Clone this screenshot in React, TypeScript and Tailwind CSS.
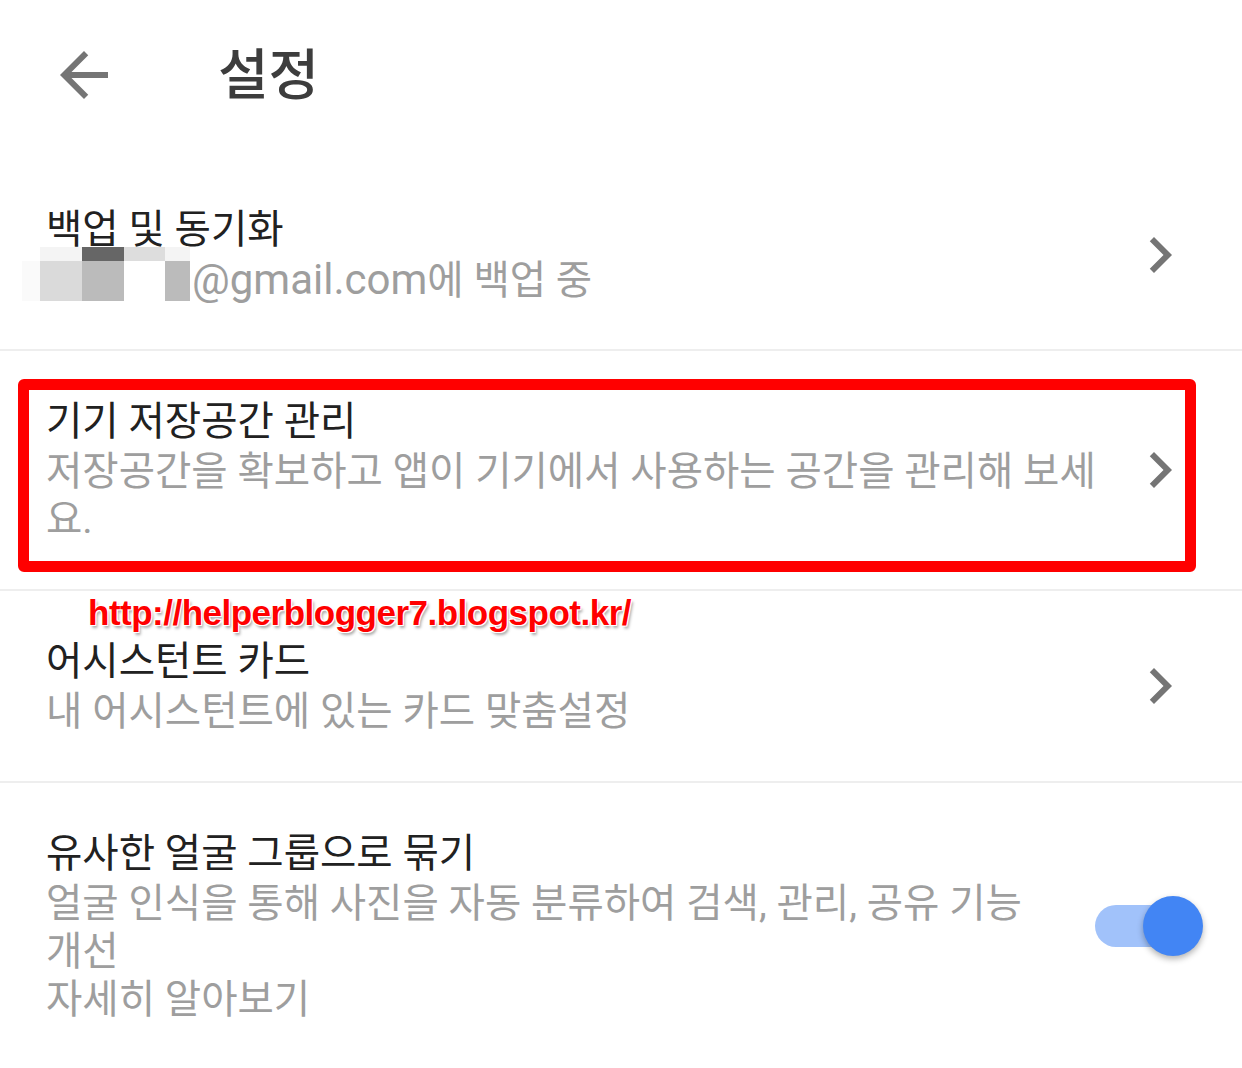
import React from "react";

const FONT = "font-['Roboto','Noto_Sans_CJK_KR',sans-serif]";

function Chevron() {
    return (
        <svg viewBox="0 0 24 24" className="w-[72px] h-[72px] shrink-0 fill-[#757575]">
            <path d="M10 6L8.59 7.41 13.17 12l-4.58 4.59L10 18l6-6z" />
        </svg>
    );
}

// pixelated (blurred) account name in front of the address
function MaskedName() {
    return (
        <div className="absolute left-[-24px] top-[-9px] flex flex-col">
            <div className="flex h-[14px]">
                <div className="w-[18px]" />
                <div className="w-[42px] bg-[#f4f4f4]" />
                <div className="w-[42px] bg-[#666666]" />
                <div className="w-[41px] bg-[#dddddd]" />
                <div className="w-[25px] bg-[#f4f4f4]" />
            </div>
            <div className="flex h-[40px]">
                <div className="w-[18px] bg-[#fafafa]" />
                <div className="w-[42px] bg-[#dadada]" />
                <div className="w-[42px] bg-[#bbbbbb]" />
                <div className="w-[41px] bg-white" />
                <div className="w-[25px] bg-[#bbbbbb]" />
            </div>
        </div>
    );
}

export default function App() {
    return (
        <div className={`w-[1242px] h-[1068px] bg-white overflow-hidden ${FONT}`}>
            {/* Header */}
            <div className="h-[160px] flex items-start pt-[39px] pl-[48px]">
                <svg viewBox="0 0 24 24" className="w-[72px] h-[72px] fill-[#757575]">
                    <path d="M20 11H7.83l5.59-5.59L12 4l-8 8 8 8 1.41-1.41L7.83 13H20v-2z" />
                </svg>
                <h1 className="ml-[98px] text-[55px] leading-[72px] text-[#3d3d3d] font-medium">설정</h1>
            </div>

            {/* Backup */}
            <div className="h-[191px] flex items-center pl-[46px] pr-[46px] border-b-2 border-[#eeeeee]">
                <div className="flex-1 min-w-0 pr-[14px]">
                    <div className="text-[39.5px] leading-[52px] text-[#212121]">백업 및 동기화</div>
                    <div className="relative pl-[146px] text-[39.5px] leading-[48px] text-[#9e9e9e] whitespace-nowrap">
                        <MaskedName />
                        <span className="text-[42px]">@gmail.com</span>에 백업 중
                    </div>
                </div>
                <Chevron />
            </div>

            {/* Storage */}
            <div className="relative h-[240px] flex items-center pl-[46px] pr-[46px] border-b-2 border-[#eeeeee]">
                <div className="flex-1 min-w-0 pr-[14px]">
                    <div className="text-[39.5px] leading-[52px] text-[#212121]">기기 저장공간 관리</div>
                    <div className="text-[39.5px] leading-[48px] text-[#9e9e9e]">
                        저장공간을 확보하고 앱이 기기에서 사용하는 공간을 관리해 보세요.
                    </div>
                </div>
                <Chevron />
                <div className="absolute left-[18px] right-[46px] top-[28px] bottom-[17px] border-[11px] border-[#ff0000] rounded-[6px] pointer-events-none" />
            </div>

            {/* Assistant cards */}
            <div className="relative h-[192px] flex items-center pl-[46px] pr-[46px] border-b-2 border-[#eeeeee]">
                <div className="flex-1 min-w-0 pr-[14px]">
                    <div className="text-[39.5px] leading-[52px] text-[#212121]">어시스턴트 카드</div>
                    <div className="text-[39.5px] leading-[48px] text-[#9e9e9e]">내 어시스턴트에 있는 카드 맞춤설정</div>
                </div>
                <Chevron />
                <div className="absolute left-[88px] top-[4px] font-['Liberation_Sans',Arial,sans-serif] font-bold text-[35px] leading-[35px] tracking-[-0.5px] text-[#ff0000] [text-shadow:1px_1px_0_#fff,-1px_-1px_0_#fff,1px_-1px_0_#fff,-1px_1px_0_#fff,2px_3px_3px_rgba(0,0,0,0.35)]">
                    http://helperblogger7.blogspot.kr/
                </div>
            </div>

            {/* Face grouping */}
            <div className="h-[285px] flex items-center pl-[46px] pr-[39px]">
                <div className="flex-1 min-w-0 pr-[35px]">
                    <div className="text-[39.5px] leading-[52px] text-[#212121]">유사한 얼굴 그룹으로 묶기</div>
                    <div className="text-[39.5px] leading-[48px] text-[#9e9e9e]">
                        얼굴 인식을 통해 사진을 자동 분류하여 검색, 관리, 공유 기능 개선
                    </div>
                    <div className="text-[39.5px] leading-[48px] text-[#9e9e9e]">자세히 알아보기</div>
                </div>
                <div className="relative w-[108px] h-[60px] shrink-0">
                    <div className="absolute left-0 top-[9px] w-[102px] h-[42px] rounded-full bg-[#a1c2fa]" />
                    <div className="absolute right-0 top-0 w-[60px] h-[60px] rounded-full bg-[#4285f4] shadow-[0_3px_6px_rgba(0,0,0,0.3)]" />
                </div>
            </div>
        </div>
    );
}
